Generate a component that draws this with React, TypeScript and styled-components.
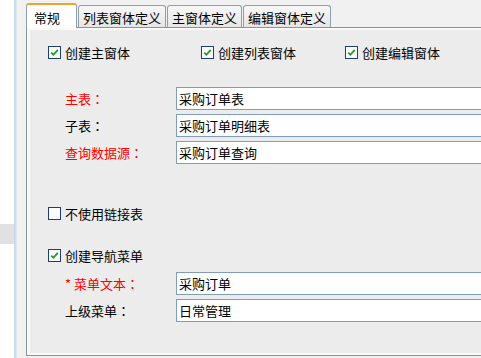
import React from "react";
import styled, { createGlobalStyle } from "styled-components";

const GlobalStyle = createGlobalStyle`
  html, body {
    margin: 0;
    padding: 0;
    background: #ffffff;
  }
  body {
    font-family: "Noto Sans CJK SC", "Noto Sans", sans-serif;
    font-size: 13px;
    color: #000;
  }
`;

const Screen = styled.div`
  display: flex;
  width: 481px;
  height: 358px;
  overflow: hidden;
`;

const LeftStrip = styled.div`
  width: 14px;
  flex-shrink: 0;
  background: #ffffff;
`;

const GreyBlock = styled.div`
  margin-top: 224px;
  height: 20px;
  background: #e1e1e1;
`;

const Divider = styled.div`
  width: 3px;
  flex-shrink: 0;
  background: linear-gradient(to right, #c3d2e3, #d6e1ec 66%, #e6ecf2);
`;

const Gutter = styled.div`
  width: 9px;
  flex-shrink: 0;
  background: #f1f1f1;
`;

const TabControl = styled.div`
  width: 540px;
  flex-shrink: 0;
  display: flex;
  flex-direction: column;
  background: #f1f1f1;
`;

const TabStrip = styled.div`
  height: 27px;
  display: flex;
  align-items: flex-end;
  gap: 1px;
`;

const Tab = styled.div<{ $active?: boolean }>`
  position: relative;
  box-sizing: border-box;
  display: flex;
  align-items: center;
  white-space: nowrap;
  font-size: 13px;
  line-height: 1;
  border: 1px solid #8e9fae;
  border-radius: 3px 3px 0 0;
  ${({ $active }) =>
    $active
      ? `
    height: 25px;
    margin-bottom: -1px;
    z-index: 1;
    padding: 1px 16px 0 7px;
    background: #ffffff;
    border-bottom: none;
    border-top: 2px solid #f0a22c;
  `
      : `
    height: 22px;
    padding: 1px 4px 0 4px;
    background: linear-gradient(#f7f7f7, #e6e6e6);
    border-bottom: none;
  `}
`;

const Page = styled.div`
  box-sizing: border-box;
  height: 329px;
  display: flex;
  border: 1px solid #86979a;
  border-right: none;
  padding: 2px 0 2px 3px;
  background: #fbf9f5;
`;

const Content = styled.div`
  flex: 1;
  box-sizing: border-box;
  background: #ececec;
  padding: 14px 0 0 18px;
  display: flex;
  flex-direction: column;
`;

const CheckGrid = styled.div`
  display: grid;
  grid-template-columns: 153px 144px auto;
  height: 17px;
  align-items: center;
`;

const CheckItem = styled.label<{ $top?: number }>`
  display: flex;
  align-items: center;
  gap: 4px;
  height: 17px;
  margin-top: ${({ $top }) => $top ?? 0}px;
  white-space: nowrap;
`;

const Box = styled.span`
  box-sizing: border-box;
  width: 13px;
  height: 13px;
  border: 1px solid #1c3f6f;
  background: #fbfbfb;
  display: flex;
  align-items: center;
  justify-content: center;
  flex-shrink: 0;
`;

const Fields = styled.div<{ $top: number }>`
  display: flex;
  flex-direction: column;
  gap: 4px;
  margin-top: ${({ $top }) => $top}px;
  padding-left: 17px;
`;

const FieldRow = styled.div`
  display: flex;
  align-items: center;
  height: 23px;
`;

const Label = styled.span<{ $required?: boolean }>`
  width: 111px;
  flex-shrink: 0;
  color: ${({ $required }) => ($required ? "#ff0000" : "#000000")};
  white-space: nowrap;
`;

// full-width colon centred in its cell, as the Windows font draws it
const Colon = styled.span`
  font-family: "Noto Sans CJK TC", "Noto Sans CJK SC", sans-serif;
`;

const TextBox = styled.div`
  flex: 1;
  box-sizing: border-box;
  height: 23px;
  margin-right: 30px;
  border: 1px solid #7f9dbd;
  background: #ffffff;
  padding: 0 2px;
  display: flex;
  align-items: center;
  white-space: nowrap;
`;

const Check = ({ checked }: { checked: boolean }) => (
  <Box>
    {checked && (
      <svg width="9" height="9" viewBox="0 0 9 9">
        <path d="M1.2 4.6 L3.4 6.8 L7.8 1.8" fill="none" stroke="#1f9a2a" strokeWidth="1.8" />
      </svg>
    )}
  </Box>
);

const Field = ({ label, value, required }: { label: string; value: string; required?: boolean }) => (
  <FieldRow>
    <Label $required={required}>
      {label}
      <Colon>：</Colon>
    </Label>
    <TextBox>{value}</TextBox>
  </FieldRow>
);

export default function App() {
  return (
    <Screen>
      <GlobalStyle />
      <LeftStrip>
        <GreyBlock />
      </LeftStrip>
      <Divider />
      <Gutter />
      <TabControl>
        <TabStrip>
          <Tab $active>常规</Tab>
          <Tab>列表窗体定义</Tab>
          <Tab>主窗体定义</Tab>
          <Tab>编辑窗体定义</Tab>
        </TabStrip>
        <Page>
          <Content>
            <CheckGrid>
              <CheckItem>
                <Check checked />
                创建主窗体
              </CheckItem>
              <CheckItem>
                <Check checked />
                创建列表窗体
              </CheckItem>
              <CheckItem>
                <Check checked />
                创建编辑窗体
              </CheckItem>
            </CheckGrid>
            <Fields $top={26}>
              <Field label="主表" value="采购订单表" required />
              <Field label="子表" value="采购订单明细表" />
              <Field label="查询数据源" value="采购订单查询" required />
            </Fields>
            <CheckItem $top={41}>
              <Check checked={false} />
              不使用链接表
            </CheckItem>
            <CheckItem $top={25}>
              <Check checked />
              创建导航菜单
            </CheckItem>
            <Fields $top={8}>
              <Field label="* 菜单文本" value="采购订单" required />
              <Field label="上级菜单" value="日常管理" />
            </Fields>
          </Content>
        </Page>
      </TabControl>
    </Screen>
  );
}
